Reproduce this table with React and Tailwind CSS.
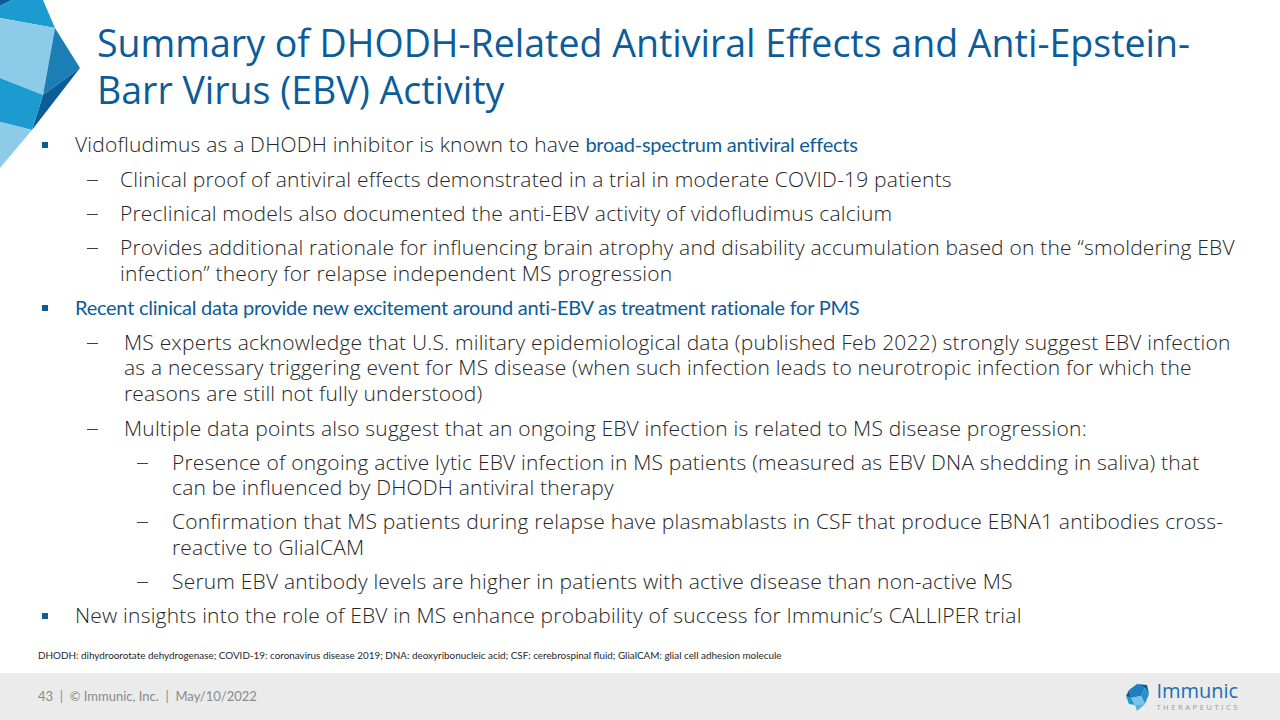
import React from 'react';

const body = { fontFamily: '"Open Sans", "Liberation Sans", sans-serif' };
const calibri = { fontFamily: 'Lato, "Liberation Sans", sans-serif' };

function Corner() {
    return (
        <svg width="82" height="172" viewBox="0 0 82 172" className="block">
            <polygon points="0,0 12,0 0,6" fill="#0b5c99" />
            <polygon points="0,6 12,0 43,0 55,28 0,18" fill="#1c9bd1" />
            <polygon points="0,18 55,28 43,95 0,78" fill="#8dcbe8" />
            <polygon points="55,28 80,68 43,95" fill="#1b7fb5" />
            <polygon points="43,95 80,68 32,130" fill="#0b5c99" />
            <polygon points="0,78 43,95 32,130 0,122" fill="#1c9bd1" />
            <polygon points="0,122 32,130 0,168" fill="#8dcbe8" />
        </svg>
    );
}

function Logo() {
    return (
        <div className="flex items-center gap-[5px]">
            <svg width="26" height="30" viewBox="0 0 26 30">
                <polygon points="4,8 12,2 20,6 16,14 6,16" fill="#1c7fc0" />
                <polygon points="12,2 22,3 24,12 20,6" fill="#0b5c99" />
                <polygon points="20,6 24,12 20,22 16,14" fill="#2a8fcf" />
                <polygon points="6,16 16,14 20,22 10,23" fill="#7cc3e8" />
                <polygon points="1,14 6,16 10,23 4,22" fill="#1c9bd1" />
                <polygon points="10,23 20,22 12,29" fill="#4fb1e0" />
                <polygon points="1,14 4,8 6,16" fill="#0b5c99" />
            </svg>
            <div className="flex flex-col items-start leading-none">
                <span className="text-[20px] text-[#1b6fb5]" style={body}>Immunic</span>
                <span className="text-[7.5px] tracking-[2.6px] text-[#9a9a9a] mt-[3px]" style={body}>THERAPEUTICS</span>
            </div>
        </div>
    );
}

function Row({ marker, indent, children, className = '' }) {
    return (
        <div className={`flex ${className}`}>
            <div className={`shrink-0 ${indent}`}>{marker}</div>
            <div className="flex-1">{children}</div>
        </div>
    );
}

const Square = () => <span className="block w-[6px] h-[6px] bg-[#0b5c99] mt-[10px]" />;
const Dash = () => <span className="block w-[11px] h-px bg-[#404040] mt-[13px]" />;

const blue = 'text-[#0b5c99] font-normal text-[20px] tracking-[-0.25px]';

export default function App() {
    return (
        <div className="w-[1280px] h-[720px] bg-white relative overflow-hidden flex flex-col text-[#262626]" style={body}>
            <div className="absolute left-0 top-0">
                <Corner />
            </div>

            <div className="pl-[97px] pr-[40px] pt-[19px]">
                <h1 className="text-[37.5px] leading-[47px] text-[#0b5c99]" style={body}>
                    Summary of DHODH-Related Antiviral Effects and Anti-Epstein-<br />Barr Virus (EBV) Activity
                </h1>
            </div>

            <div className="pl-[42px] pr-[38px] pt-[19px] text-[21px] leading-[25.5px] font-light tracking-[0.2px] flex flex-col gap-[8.5px]">
                <Row marker={<Square />} indent="w-[33px]">
                    Vidofludimus as a DHODH inhibitor is known to have{' '}
                    <span className={blue} style={calibri}>broad-spectrum antiviral effects</span>
                </Row>
                <Row marker={<Dash />} indent="w-[78px] pl-[45px]" className="mt-[1px]">
                    Clinical proof of antiviral effects demonstrated in a trial in moderate COVID-19 patients
                </Row>
                <Row marker={<Dash />} indent="w-[78px] pl-[45px]">
                    Preclinical models also documented the anti-EBV activity of vidofludimus calcium
                </Row>
                <Row marker={<Dash />} indent="w-[78px] pl-[45px]">
                    Provides additional rationale for influencing brain atrophy and disability accumulation based on the “smoldering EBV infection” theory for relapse independent MS progression
                </Row>
                <Row marker={<Square />} indent="w-[33px]">
                    <span className={blue} style={calibri}>Recent clinical data provide new excitement around anti-EBV as treatment rationale for PMS</span>
                </Row>
                <Row marker={<Dash />} indent="w-[82px] pl-[45px]" className="mt-[1px]">
                    MS experts acknowledge that U.S. military epidemiological data (published Feb 2022) strongly suggest EBV infection as a necessary triggering event for MS disease (when such infection leads to neurotropic infection for which the reasons are still not fully understood)
                </Row>
                <Row marker={<Dash />} indent="w-[82px] pl-[45px]" className="mt-[1px]">
                    Multiple data points also suggest that an ongoing EBV infection is related to MS disease progression:
                </Row>
                <Row marker={<Dash />} indent="w-[130px] pl-[95px]" className="pr-[16px]">
                    Presence of ongoing active lytic EBV infection in MS patients (measured as EBV DNA shedding in saliva) that can be influenced by DHODH antiviral therapy
                </Row>
                <Row marker={<Dash />} indent="w-[130px] pl-[95px]" className="pr-[16px]">
                    Confirmation that MS patients during relapse have plasmablasts in CSF that produce EBNA1 antibodies cross-reactive to GlialCAM
                </Row>
                <Row marker={<Dash />} indent="w-[130px] pl-[95px]">
                    Serum EBV antibody levels are higher in patients with active disease than non-active MS
                </Row>
                <Row marker={<Square />} indent="w-[33px]">
                    New insights into the role of EBV in MS enhance probability of success for Immunic’s CALLIPER trial
                </Row>
            </div>

            <div className="pl-[38px] pt-[20px] text-[9.9px] text-[#262626]" style={calibri}>
                DHODH: dihydroorotate dehydrogenase; COVID-19: coronavirus disease 2019; DNA: deoxyribonucleic acid; CSF: cerebrospinal fluid; GlialCAM: glial cell adhesion molecule
            </div>

            <div className="mt-auto h-[47px] bg-[#ebebeb] flex items-center justify-between pl-[38px] pr-[40px]">
                <span className="text-[13px] text-[#8a8a8a]" style={calibri}>43&nbsp;&nbsp;|&nbsp;&nbsp;© Immunic, Inc.&nbsp;&nbsp;|&nbsp;&nbsp;May/10/2022</span>
                <Logo />
            </div>
        </div>
    );
}
